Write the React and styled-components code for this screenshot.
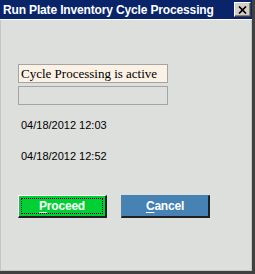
import React from 'react';
import styled, { createGlobalStyle } from 'styled-components';

const Global = createGlobalStyle`
    html, body {
        margin: 0;
        padding: 0;
        background: #dddfdc;
    }
`;

const Ventana = styled.div`
    width: 255px;
    height: 274px;
    box-sizing: border-box;
    display: flex;
    flex-direction: column;
    border-right: 3px solid #404040;
    border-bottom: 3px solid #404040;
    background: #dddfdc;
`;

const BarraTitulo = styled.div`
    height: 19px;
    background: #0a246a;
    display: flex;
    align-items: center;
    justify-content: space-between;
    padding: 0 1px 0 3px;
    border-bottom: 1px solid #ffffff;
`;

const Titulo = styled.span`
    color: #fff;
    font-family: "Liberation Sans", Arial, sans-serif;
    font-weight: bold;
    font-size: 12px;
    letter-spacing: -0.15px;
    margin-top: 1px;
`;

const BotonCerrar = styled.div`
    width: 15px;
    height: 13px;
    background: #d4d0c8;
    border-top: 1px solid #fff;
    border-left: 1px solid #fff;
    border-right: 1px solid #404040;
    border-bottom: 1px solid #404040;
    box-shadow: inset -1px -1px 0 #808080;
    display: flex;
    align-items: center;
    justify-content: center;
`;

const Cuerpo = styled.div`
    flex: 1;
    display: flex;
    flex-direction: column;
    padding: 44px 0 0 17px;
    border-left: 1px solid #c4c6c3;
    border-right: 1px solid #c4c6c3;
    border-bottom: 1px solid #c4c6c3;
`;

const Caja = styled.div`
    width: 150px;
    height: 19px;
    box-sizing: border-box;
    border: 1px solid #a4a4a4;
    background: ${props => props.activo ? '#fbf1e5' : '#dddfdc'};
    font-family: "Liberation Serif", serif;
    font-size: 13px;
    line-height: 17px;
    padding-left: 2px;
    color: #000;
    margin-bottom: ${props => props.abajo || 0}px;
`;

const Fecha = styled.div`
    font-family: "Liberation Sans", Arial, sans-serif;
    font-size: 11px;
    color: #000;
    padding-left: 3px;
    height: 14px;
    line-height: 14px;
    margin-bottom: ${props => props.abajo || 0}px;
`;

const Botonera = styled.div`
    display: flex;
    gap: 14px;
`;

const Boton = styled.div`
    width: 86px;
    height: 20px;
    display: flex;
    align-items: center;
    justify-content: center;
    color: #fff;
    font-family: "Liberation Sans", Arial, sans-serif;
    font-weight: bold;
    font-size: 12px;
    letter-spacing: -0.2px;
    background: ${props => props.verde ? '#00d033' : '#4682b4'};
    border-top: 1px solid ${props => props.verde ? '#ffffff' : '#4682b4'};
    border-left: 1px solid ${props => props.verde ? '#ffffff' : '#4682b4'};
    border-right: 2px solid #202020;
    border-bottom: 2px solid #202020;
    box-sizing: content-box;
    position: relative;

    u {
        text-decoration: underline;
        text-underline-offset: 2px;
    }
`;

const Foco = styled.span`
    position: absolute;
    inset: 2px;
    border: 1px dotted #c000c0;
    outline: 1px dotted #000;
    outline-offset: -1px;
`;

const App = () => {
    return (
        <>
            <Global />
            <Ventana>
                <BarraTitulo>
                    <Titulo>Run Plate Inventory Cycle Processing</Titulo>
                    <BotonCerrar>
                        <svg width="9" height="8" viewBox="0 0 9 8">
                            <path d="M1 0.5 L8 7.5 M8 0.5 L1 7.5" stroke="#000" strokeWidth="1.7" />
                        </svg>
                    </BotonCerrar>
                </BarraTitulo>
                <Cuerpo>
                    <Caja activo abajo={3}>Cycle Processing is active</Caja>
                    <Caja abajo={13} />
                    <Fecha abajo={17}>04/18/2012 12:03</Fecha>
                    <Fecha abajo={32}>04/18/2012 12:52</Fecha>
                    <Botonera>
                        <Boton verde>
                            <Foco />
                            <span><u>P</u>roceed</span>
                        </Boton>
                        <Boton>
                            <span><u>C</u>ancel</span>
                        </Boton>
                    </Botonera>
                </Cuerpo>
            </Ventana>
        </>
    );
};

export default App;
